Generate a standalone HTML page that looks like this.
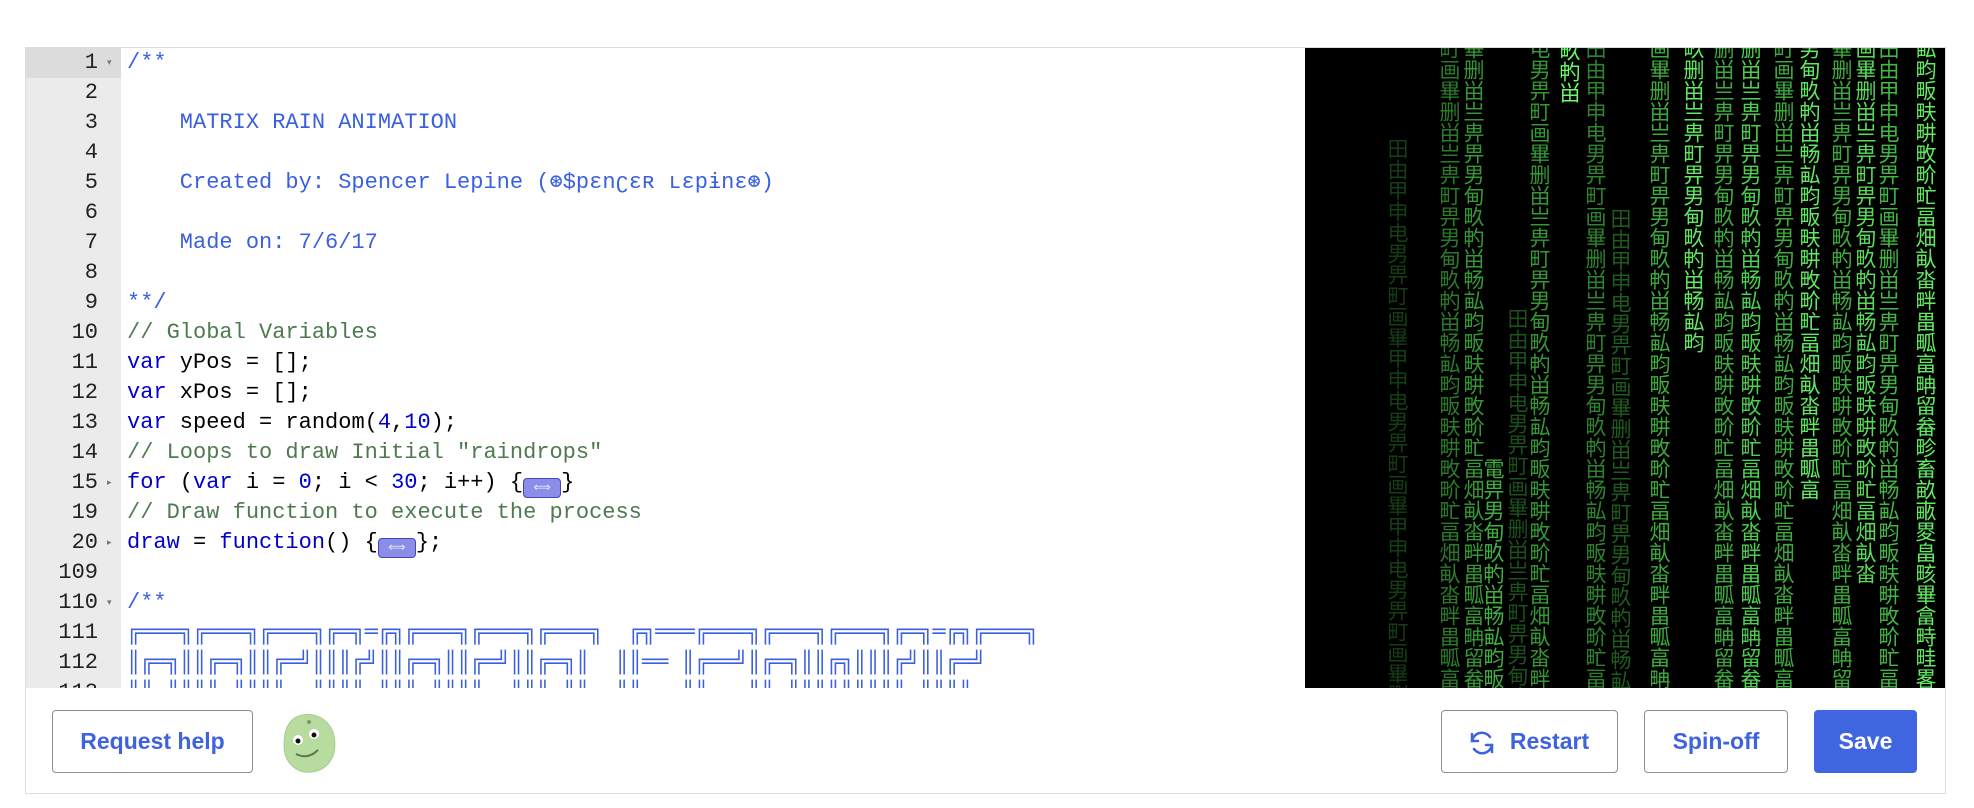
<!DOCTYPE html>
<html><head><meta charset="utf-8"><style>
*{margin:0;padding:0;box-sizing:border-box}
body{width:1974px;height:808px;background:#fff;position:relative;overflow:hidden;font-family:"Liberation Sans",sans-serif}
#frame{position:absolute;left:25px;top:47px;width:1921px;height:747px;border:1px solid #dcdcdc}
#gutter{position:absolute;left:26px;top:48px;width:95px;height:640px;background:#ebebeb;overflow:hidden}
#code{position:absolute;left:121px;top:48px;width:1184px;height:640px;overflow:hidden;background:#fff}
.ln{position:absolute;left:0;width:72px;text-align:right;font:22px/30px "Liberation Mono",monospace;color:#222}
.fa{position:absolute;left:81px;font-size:9px;color:#777}
.cl{position:absolute;left:6px;font:22px/30px "Liberation Mono",monospace;color:#000;white-space:pre}
.dc{color:#3a5fe0}.kw{color:#0000cd}.nm{color:#0000cd}.cm{color:#4f7a4f}
.fold{display:inline-block;width:38px;height:20px;background:#8a8ee8;border:1px solid #4448b0;border-radius:4px;vertical-align:-3px;color:#eef;font-size:12px;line-height:18px;text-align:center;letter-spacing:0}
#canvas{position:absolute;left:1305px;top:48px;width:640px;height:640px;background:#000;overflow:hidden}
.col{position:absolute;writing-mode:vertical-rl;font:21px/22px "Noto Sans CJK SC",sans-serif;letter-spacing:0;white-space:nowrap}
.btn{position:absolute;top:710px;height:63px;border:1px solid #8e8e8e;border-radius:4px;color:#3f63dd;font:bold 23px/61px "Liberation Sans",sans-serif;text-align:center;background:#fff}
</style></head><body>
<div id="frame"></div>
<div id="gutter">
<div style="position:absolute;left:0;top:0;width:95px;height:30px;background:#dcdcdc"></div>
<div class="ln" style="top:0">1</div><div class="fa" style="top:9px">▾</div>
<div class="ln" style="top:30px">2</div>
<div class="ln" style="top:60px">3</div>
<div class="ln" style="top:90px">4</div>
<div class="ln" style="top:120px">5</div>
<div class="ln" style="top:150px">6</div>
<div class="ln" style="top:180px">7</div>
<div class="ln" style="top:210px">8</div>
<div class="ln" style="top:240px">9</div>
<div class="ln" style="top:270px">10</div>
<div class="ln" style="top:300px">11</div>
<div class="ln" style="top:330px">12</div>
<div class="ln" style="top:360px">13</div>
<div class="ln" style="top:390px">14</div>
<div class="ln" style="top:420px">15</div><div class="fa" style="top:429px">▸</div>
<div class="ln" style="top:450px">19</div>
<div class="ln" style="top:480px">20</div><div class="fa" style="top:489px">▸</div>
<div class="ln" style="top:510px">109</div>
<div class="ln" style="top:540px">110</div><div class="fa" style="top:549px">▾</div>
<div class="ln" style="top:570px">111</div>
<div class="ln" style="top:600px">112</div>
<div class="ln" style="top:630px">113</div>
</div>
<div id="code">
<div class="cl dc" style="top:0">/**</div>
<div class="cl dc" style="top:60px">    MATRIX RAIN ANIMATION</div>
<div class="cl dc" style="top:120px">    Created by: Spencer Lepine (⊛$pɛnʗɛʀ ʟɛpɨnɛ⊛)</div>
<div class="cl dc" style="top:180px">    Made on: 7/6/17</div>
<div class="cl dc" style="top:240px">**/</div>
<div class="cl cm" style="top:270px">// Global Variables</div>
<div class="cl" style="top:300px"><span class="kw">var</span> yPos = [];</div>
<div class="cl" style="top:330px"><span class="kw">var</span> xPos = [];</div>
<div class="cl" style="top:360px"><span class="kw">var</span> speed = random(<span class="nm">4</span>,<span class="nm">10</span>);</div>
<div class="cl cm" style="top:390px">// Loops to draw Initial "raindrops"</div>
<div class="cl" style="top:420px"><span class="kw">for</span> (<span class="kw">var</span> i = <span class="nm">0</span>; i &lt; <span class="nm">30</span>; i++) {<span class="fold">⟺</span>}</div>
<div class="cl cm" style="top:450px">// Draw function to execute the process</div>
<div class="cl" style="top:480px"><span class="kw">draw</span> = <span class="kw">function</span>() {<span class="fold">⟺</span>};</div>
<div class="cl dc" style="top:540px">/**</div>
<div class="cl dc" style="top:570px;letter-spacing:0">╔═══╗╔═══╗╔═══╗╔═╗═╔╗╔═══╗╔═══╗╔═══╗  ╔╗═══╔═══╗╔═══╗╔═══╗╔═╗═╔╗╔═══╗</div>
<div class="cl dc" style="top:600px;letter-spacing:0">║╔═╗║║╔═╗║║╔═╝║║║╔╝║║╔═╗║║╔═╝║║╔═╗║  ║║══ ║╔══╝║╔═╗║║╔╗║║║╔╝║║╔═╝</div>
<div class="cl dc" style="top:630px;letter-spacing:0">║║ ║║║║ ║║║║  ║║║║ ║║║ ║║║║  ║║║ ║║  ║║   ║║   ║║ ║║║║║║║║║ ║║║║  </div>
</div>
<div id="canvas">
<div class="col" style="left:82px;top:90px;color:#133f13">田由甲申电男畀町画畢甲申电男畀町画畢甲申电男畀町画畢删畄亗畁</div>
<div class="col" style="left:134px;top:-10px;color:#2a7a2a">町画畢删畄亗畁町畀男甸畂畃畄畅畆畇畈畉畊畋畍甿畐畑畒畓畔畕畖畗畘留畚</div>
<div class="col" style="left:158px;top:-10px;color:#349834">畢删畄亗畁畀男甸畂畃畄畅畆畇畈畉畊畋畍甿畐畑畒畓畔畕畖畗畘留畚畛</div>
<div class="col" style="left:178px;top:410px;color:#3fb03f">電畀男甸畂畃畄畅畆畇畈畉畊畋</div>
<div class="col" style="left:202px;top:260px;color:#1c501c">田由甲申电男畀町画畢删畄亗畁町畀男甸畂</div>
<div class="col" style="left:224px;top:-10px;color:#349834">电男畀町画畢删畄亗畁町畀男甸畂畃畄畅畆畇畈畉畊畋畍甿畐畑畒畓畔畕</div>
<div class="col" style="left:254px;top:-8px;color:#6f6">畂畃畄</div>
<div class="col" style="left:280px;top:-10px;color:#2d842d">田由甲申电男畀町画畢删畄亗畁町畀男甸畂畃畄畅畆畇畈畉畊畋畍甿畐畑畒</div>
<div class="col" style="left:305px;top:160px;color:#1e5c1e">田由甲申电男畀町画畢删畄亗畁町畀男甸畂畃畄畅畆</div>
<div class="col" style="left:344px;top:-10px;color:#3daa3d">画畢删畄亗畁町畀男甸畂畃畄畅畆畇畈畉畊畋畍甿畐畑畒畓畔畕畖畗畘留</div>
<div class="col" style="left:378px;top:-10px;color:#60ea60">畂删畄亗畁町畀男甸畂畃畄畅畆畇</div>
<div class="col" style="left:408px;top:-10px;color:#3daa3d">删畄亗畁町畀男甸畂畃畄畅畆畇畈畉畊畋畍甿畐畑畒畓畔畕畖畗畘留畚畛</div>
<div class="col" style="left:435px;top:-10px;color:#4fcf4f">删畄亗畁町畀男甸畂畃畄畅畆畇畈畉畊畋畍甿畐畑畒畓畔畕畖畗畘留畚畛</div>
<div class="col" style="left:468px;top:-10px;color:#3daa3d">町画畢删畄亗畁町畀男甸畂畃畄畅畆畇畈畉畊畋畍甿畐畑畒畓畔畕畖畗畘留</div>
<div class="col" style="left:494px;top:-10px;color:#60ea60">男甸畂畃畄畅畆畇畈畉畊畋畍甿畐畑畒畓畔畕畖畗</div>
<div class="col" style="left:526px;top:-10px;color:#3daa3d">畢删畄亗畁町畀男甸畂畃畄畅畆畇畈畉畊畋畍甿畐畑畒畓畔畕畖畗畘留畚畛</div>
<div class="col" style="left:550px;top:-10px;color:#58dc58">画畢删畄亗畁町畀男甸畂畃畄畅畆畇畈畉畊畋畍甿畐畑畒畓</div>
<div class="col" style="left:573px;top:-10px;color:#42b642">田由甲申电男畀町画畢删畄亗畁町畀男甸畂畃畄畅畆畇畈畉畊畋畍甿畐畑畒</div>
<div class="col" style="left:610px;top:-10px;color:#60ea60">畆畇畈畉畊畋畍甿畐畑畒畓畔畕畖畗畘留畚畛畜畝畞畟畠畡畢畣畤畦畧</div>
</div>
<div class="btn" style="left:52px;width:201px">Request help</div>
<svg style="position:absolute;left:278px;top:710px" width="64" height="66" viewBox="0 0 64 66">
<path d="M14 10 C28 -2 52 6 56 26 C60 46 50 60 34 62 C18 64 6 52 6 36 C6 24 8 16 14 10Z" fill="#b8dca0" stroke="#a6cf8c"/>
<circle cx="20" cy="30" r="5" fill="#fff"/><circle cx="20" cy="31" r="2.5" fill="#111"/>
<circle cx="36" cy="24" r="5" fill="#fff"/><circle cx="36" cy="25" r="2.5" fill="#111"/>
<circle cx="31" cy="12" r="2" fill="#7a9a6a"/>
<path d="M18 44 Q30 50 40 40" stroke="#5b7a4b" stroke-width="2" fill="none"/>
</svg>
<div class="btn" style="left:1441px;width:177px;padding-left:40px">Restart
<svg style="position:absolute;left:26px;top:18px" width="28" height="28" viewBox="0 0 28 28" fill="none" stroke="#3f63dd" stroke-width="2.5" stroke-linecap="round"><path d="M4 12 A10 10 0 0 1 22 8"/><path d="M4 5 V12 H10"/><path d="M24 16 A10 10 0 0 1 6 20"/><path d="M24 23 V16 H18"/></svg></div>
<div class="btn" style="left:1644px;width:144px">Spin-off</div>
<div class="btn" style="left:1814px;width:103px;background:#4065e0;border-color:#4065e0;color:#fff">Save</div>
</body></html>
